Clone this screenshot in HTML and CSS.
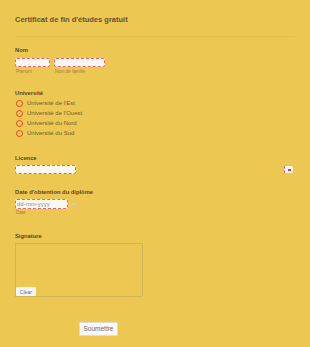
FILE: index.html
```html
<!DOCTYPE html>
<html>
<head>
    <title>Certificat de fin d'études gratuit</title>
    <link rel="stylesheet" href="styles.css">
</head>
<body>
    <div class="form">
        <h1 class="form-title">Certificat de fin d'études gratuit</h1>
        <div class="divider"></div>

        <div class="field field-nom">
            <label class="label">Nom</label>
            <div class="name-row">
                <div class="name-part">
                    <input type="text" class="input input-first">
                    <span class="sublabel">Prénom</span>
                </div>
                <div class="name-part">
                    <input type="text" class="input input-last">
                    <span class="sublabel">Nom de famille</span>
                </div>
            </div>
        </div>

        <div class="field field-uni">
            <label class="label">Université</label>
            <div class="radio-list">
                <div class="radio-item"><span class="radio"></span>Université de l'Est</div>
                <div class="radio-item"><span class="radio"></span>Université de l'Ouest</div>
                <div class="radio-item"><span class="radio"></span>Université du Nord</div>
                <div class="radio-item"><span class="radio"></span>Université du Sud</div>
            </div>
        </div>

        <div class="field field-licence">
            <label class="label">Licence</label>
            <div class="select-row">
                <div class="input input-select"></div>
                <div class="select-arrow"><span class="arrow-dot"></span></div>
            </div>
        </div>

        <div class="field field-date">
            <label class="label">Date d'obtention du diplôme</label>
            <div class="date-row">
                <div class="input input-date">dd-mm-yyyy</div>
                <span class="date-btn"></span>
            </div>
            <span class="sublabel">Date</span>
        </div>

        <div class="field field-sign">
            <label class="label">Signature</label>
            <div class="sign-pad">
                <button class="clear-btn">Clear</button>
            </div>
        </div>

        <div class="submit-row">
            <button class="submit-btn">Soumettre</button>
        </div>
    </div>
</body>
</html>
```

FILE: styles.css
```css
body {
    margin: 0;
    background-color: #ecc751;
    font-family: "Liberation Sans", Arial, sans-serif;
    color: #5e4526;
}
.form {
    padding: 15px 15px 0 15px;
    height: 347px;
    box-sizing: border-box;
}
.form-title {
    margin: 0;
    font-size: 7.5px;
    line-height: 10px;
    font-weight: bold;
    color: #6a5133;
}
.divider {
    margin-top: 11px;
    height: 1px;
    background-color: #e2bd4b;
}
.field {
    display: flex;
    flex-direction: column;
    align-items: flex-start;
}
.label {
    font-size: 5.8px;
    line-height: 8px;
    font-weight: bold;
    color: #5e4526;
}
.field-nom {
    margin-top: 9px;
}
.name-row {
    display: flex;
    gap: 4px;
    margin-top: 4px;
}
.name-part {
    display: flex;
    flex-direction: column;
}
.input {
    height: 9px;
    box-sizing: border-box;
    border: 1px dashed #f0605a;
    border-radius: 2px;
    background-color: #f8f7f4;
    padding: 0;
    margin: 0;
    outline: none;
}
.input-first {
    width: 35px;
}
.input-last {
    width: 51px;
}
.sublabel {
    font-size: 4.5px;
    line-height: 6px;
    color: #9c7d3c;
    margin-top: 2px;
    padding-left: 1px;
}
.field-uni {
    margin-top: 14px;
}
.radio-list {
    margin-top: 1px;
    display: flex;
    flex-direction: column;
}
.radio-item {
    display: flex;
    align-items: center;
    height: 10px;
    font-size: 6px;
    color: #75592c;
}
.radio {
    width: 7px;
    height: 7px;
    box-sizing: border-box;
    border: 1.2px solid #e8432a;
    border-radius: 50%;
    margin-left: 1px;
    margin-right: 4px;
}
.field-licence {
    margin-top: 16px;
    align-items: stretch;
}
.select-row {
    display: flex;
    justify-content: space-between;
    align-items: center;
    margin-top: 3px;
}
.input-select {
    width: 61px;
}
.select-arrow {
    width: 8px;
    height: 7px;
    margin-right: 2px;
    background-color: #fbfaf7;
    border-left: 1px dashed #f0605a;
    border-radius: 0 2px 2px 0;
    display: flex;
    align-items: center;
    justify-content: center;
}
.arrow-dot {
    width: 3px;
    height: 2px;
    background-color: #e8332a;
}
.field-date {
    margin-top: 14px;
}
.date-row {
    display: flex;
    align-items: center;
    gap: 3px;
    margin-top: 3px;
}
.input-date {
    width: 53px;
    height: 10px;
    font-size: 6px;
    line-height: 8px;
    color: #8e8c88;
    padding-left: 1px;
}
.date-btn {
    width: 6px;
    height: 2px;
    border-radius: 1px;
    background-color: #cfccc2;
}
.field-date .sublabel {
    margin-top: 1px;
}
.field-sign {
    margin-top: 16px;
}
.sign-pad {
    margin-top: 3px;
    width: 128px;
    height: 54px;
    box-sizing: border-box;
    border: 1px solid #d2b45a;
    display: flex;
    align-items: flex-end;
}
.clear-btn {
    font-family: "Liberation Sans", Arial, sans-serif;
    font-size: 5px;
    color: #6c7080;
    background-color: #f3f4f8;
    border: none;
    border-radius: 1px;
    width: 20px;
    height: 9px;
    padding: 0;
}
.submit-row {
    margin-top: 20px;
    padding-left: 64px;
}
.submit-btn {
    font-family: "Liberation Sans", Arial, sans-serif;
    font-size: 6.5px;
    color: #6a6a6a;
    background-color: #fafaf8;
    border: 1px solid #e0dcd0;
    border-radius: 1px;
    width: 39px;
    height: 14px;
    padding: 0;
}
```
